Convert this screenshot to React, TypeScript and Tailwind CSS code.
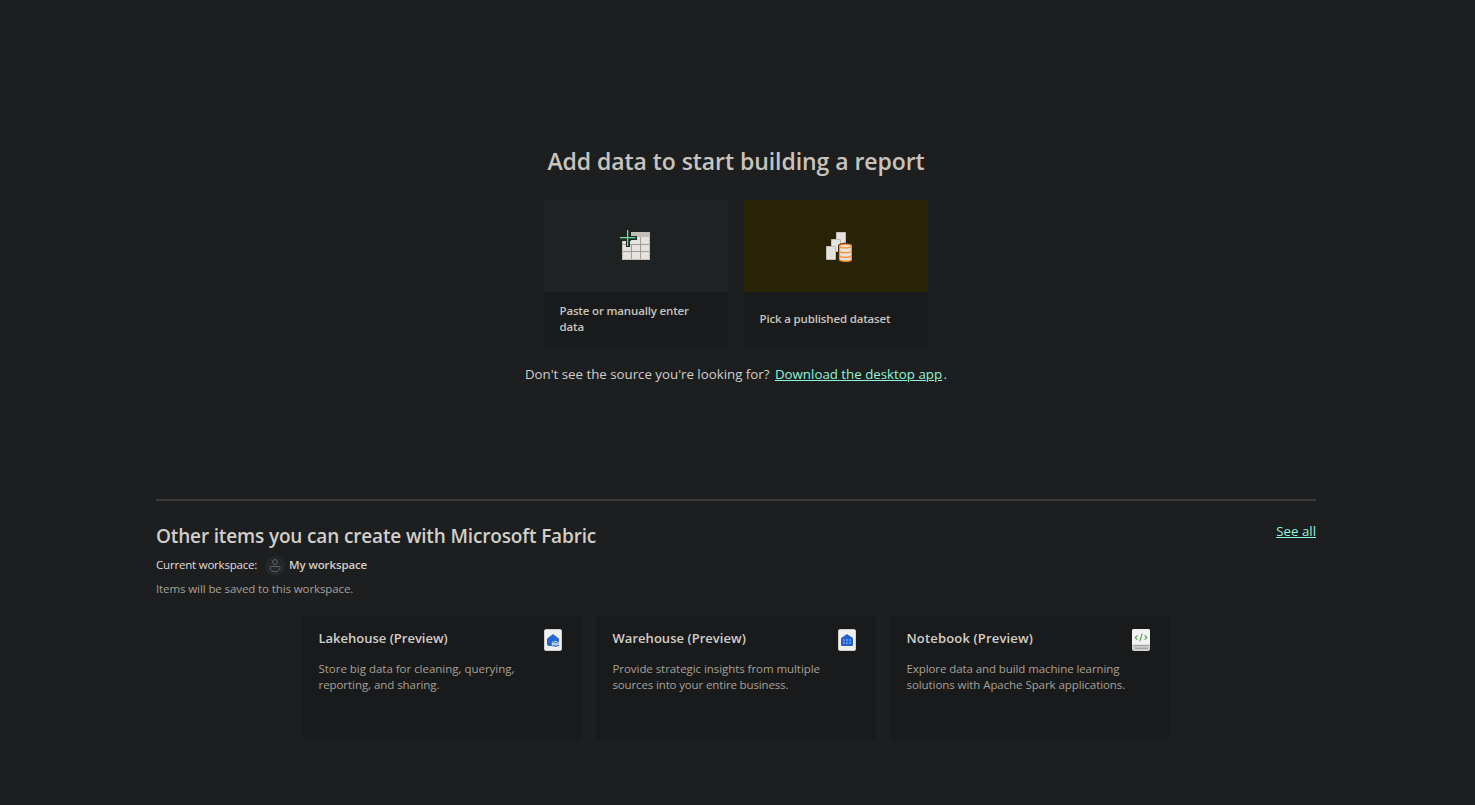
import type { ReactNode } from "react";

function TableIcon() {
  return (
    <svg width="32" height="32" viewBox="0 0 32 32">
      <path d="M11 2h19v28H2V11h9z" fill="#c4beb5" />
      <path d="M3 11h8v18H3zM11 7h18v22H11z" fill="#e5e3df" />
      <path d="M11.5 15v14M20.5 7v22M3 14.5h26M3 21.5h26" stroke="#a39b8d" fill="none" />
      <path d="M6 0h4v17H6zM0 6h17v4H0z" fill="#222727" />
      <path d="M7 0h1v16H7zM0 7h15.500v1H0z" fill="#6fdc92" />
      <path d="M8 0h1v7H8zM0 8h7v1H0zM8 8h1v8H8zM9 8h7v1H9z" fill="#2f5f42" />
    </svg>
  );
}

function DatasetIcon() {
  return (
    <svg width="32" height="32" viewBox="0 0 32 32">
      <g fill="#e5e3df" stroke="#c4beb5">
        <path d="M16.5 2.5h9v12h-9z" />
        <path d="M11.5 9.5h9v12h-9z" />
        <path d="M6.5 16.5h9v13h-9z" />
      </g>
      <path d="M18 16c0-4.500 15.500-4.500 15.500 0v13.500H32c0 3-14 3-14 0z" fill="#282306" />
      <path d="M19.500 16.200c0-2.600 12-2.600 12 0v13.300c0 2.400-12 2.400-12 0z" fill="#e5e3df" stroke="#ff8a22" strokeWidth="1.300" />
      <path d="M19.500 16.200c0 2.300 12 2.300 12 0M19.500 20.900c0 2.300 12 2.300 12 0M19.500 25.600c0 2.300 12 2.300 12 0" fill="none" stroke="#ff8a22" strokeWidth="1.200" />
    </svg>
  );
}

function LakehouseIcon() {
  return (
    <svg width="18" height="22" viewBox="0 0 18 22">
      <rect x="0.5" y="0.5" width="17" height="21" rx="1.5" fill="#f0f0f0" stroke="#cfcfcf" />
      <path d="M9 5 14.400 9.200q.6.500.6 1V12H9q-1.500 1-1.200 2.500L8 17H5q-2 0-2-2v-4.800q0-.6.600-1z" fill="#2467d3" />
      <path d="M8.600 13.800q1-1.800 2.100-.6t2.100 0 2.200 0M8.600 17.400q1-1.800 2.100-.6t2.100 0 2.200 0" stroke="#2467d3" fill="none" strokeWidth="1.100" />
      <path d="M8.600 15.600q1-1.800 2.100-.6t2.100 0 2.200 0" stroke="#5b8fe4" fill="none" strokeWidth=".8" />
    </svg>
  );
}

function WarehouseIcon() {
  return (
    <svg width="18" height="22" viewBox="0 0 18 22">
      <rect x="0.5" y="0.5" width="17" height="21" rx="1.5" fill="#f0f0f0" stroke="#cfcfcf" />
      <path d="M9 5 14.500 8.700q.5.500.5 1V16q0 1-1 1H4q-1 0-1-1V9.700q0-.6.500-1z" fill="#2060cf" />
      <path d="M5 10h2v2H5zM8 10h2v2H8zM11 10h2v2h-2zM5 13h2v2H5zM8 13h2v2H8zM11 13h2v2h-2z" fill="#5c8fe6" />
    </svg>
  );
}

function NotebookIcon() {
  return (
    <svg width="18" height="22" viewBox="0 0 18 22">
      <rect width="18" height="22" rx="2" fill="#d0d0d0" />
      <path d="M2 0h14q2 0 2 2v13.500H0V2q0-2 2-2z" fill="#f2f2f2" />
      <path d="M1.500 16.500H17M3 19.500h13" stroke="#a2a2a2" fill="none" />
      <path d="M2 17.500h15V19H2z" fill="#c0c0c0" />
      <path d="M5.400 6.300 3.200 8.500l2.200 2.200M12.600 6.300l2.200 2.200-2.200 2.200M10.200 4.600 7.800 12.400" stroke="#4da04d" fill="none" strokeWidth="1.100" />
    </svg>
  );
}

function PersonIcon() {
  return (
    <span className="flex size-5 items-center justify-center rounded-full bg-[#25282a]">
      <svg width="12" height="14" viewBox="0 0 12 14" fill="none" stroke="#626365">
        <circle cx="6" cy="3" r="2.400" />
        <path d="M2 7.500h8q1 0 1 1c0 5.700-10 5.700-10 0q0-1 1-1z" />
      </svg>
    </span>
  );
}

function SourceCard({ tone, icon, children }: { tone: string; icon: ReactNode; children: ReactNode }) {
  return (
    <button className="flex h-[146px] w-[184px] flex-col rounded-sm bg-[#191a1b] text-left shadow-[0_0_2px_rgba(0,0,0,0.2)]">
      <span className={`flex h-[92px] w-full items-center justify-center ${tone}`}>{icon}</span>
      <span className="flex w-full flex-1 items-center pr-4 pl-[15.5px] text-[11.5px] leading-4 font-semibold tracking-[-0.16px] text-[#c8c4bd]">
        {children}
      </span>
    </button>
  );
}

type Line = { text: string; tracking: string };

function ItemCard({ title, titleTracking, lines, icon }: { title: string; titleTracking: string; lines: Line[]; icon: ReactNode }) {
  return (
    <article className="flex h-[123px] w-[280px] justify-between rounded-sm bg-[#191a1b] pr-5 pl-[16.5px] shadow-[0_0_2px_rgba(0,0,0,0.08)]">
      <div className="pt-3">
        <h3 className={`text-[13px] leading-5 font-semibold text-[#d2cfca] ${titleTracking}`}>{title}</h3>
        <p className="mt-[13px] text-[11.5px] leading-4 text-[#a8a196]">
          {lines.map((line) => (
            <span key={line.text} className={`block whitespace-nowrap ${line.tracking}`}>{line.text}</span>
          ))}
        </p>
      </div>
      <div className="pt-[13px]">{icon}</div>
    </article>
  );
}

export default function App() {
  return (
    <main className="h-[805px] w-full overflow-hidden bg-[#1d1e1f] pl-[156px] font-['Open_Sans',sans-serif]">
      <div className="flex w-[1160px] flex-col">
        <section className="flex h-[499px] flex-col items-center pt-[145px]">
          <h1 className="text-[23px] leading-8 font-semibold tracking-[-0.06px] text-[#c8c4bd]">Add data to start building a report</h1>
          <div className="mt-[23px] flex gap-4">
            <SourceCard tone="bg-[#1e2223]" icon={<TableIcon />}>Paste or manually enter data</SourceCard>
            <SourceCard tone="bg-[#282306]" icon={<DatasetIcon />}>Pick a published dataset</SourceCard>
          </div>
          <p className="mt-[18px] flex text-[13.3px] leading-5 text-[#d2cfca]">
            <span className="tracking-[-0.01px]">Don't see the source you're looking for?</span>
            <a className="ml-[5.5px] text-[#8ff5dc] underline">Download the desktop app</a>
            <span className="ml-[1.5px]">.</span>
          </p>
        </section>
        <hr className="border-0 border-t-2 border-[#3b3b3c]" />
        <section className="pt-5">
          <div className="flex justify-between">
            <h2 className="pt-px text-[19px] leading-7 font-semibold tracking-[-0.15px] text-[#d2cfca]">Other items you can create with Microsoft Fabric</h2>
            <a className="text-[13.3px] leading-5 text-[#8ff5dc] underline">See all</a>
          </div>
          <div className="mt-[5px] flex h-5 items-center text-[11.5px] text-[#e1dfdd]">
            <span className="tracking-[-0.2px]">Current workspace:</span>
            <span className="mr-1 ml-[7.9px] pt-0.5"><PersonIcon /></span>
            <span className="font-semibold tracking-[-0.12px] text-[#d2cfca]">My workspace</span>
          </div>
          <p className="mt-1.5 text-[11.5px] leading-4 tracking-[-0.1px] text-[#a8a196]">Items will be saved to this workspace.</p>
          <div className="mt-[19px] flex justify-center gap-3.5">
            <ItemCard
              title="Lakehouse (Preview)"
              titleTracking="tracking-normal"
              lines={[
                { text: "Store big data for cleaning, querying,", tracking: "tracking-[-0.02px]" },
                { text: "reporting, and sharing.", tracking: "tracking-[-0.06px]" },
              ]}
              icon={<LakehouseIcon />}
            />
            <ItemCard
              title="Warehouse (Preview)"
              titleTracking="tracking-[0.04px]"
              lines={[
                { text: "Provide strategic insights from multiple", tracking: "tracking-[-0.06px]" },
                { text: "sources into your entire business.", tracking: "tracking-[-0.14px]" },
              ]}
              icon={<WarehouseIcon />}
            />
            <ItemCard
              title="Notebook (Preview)"
              titleTracking="tracking-[0.17px]"
              lines={[
                { text: "Explore data and build machine learning", tracking: "tracking-[-0.09px]" },
                { text: "solutions with Apache Spark applications.", tracking: "tracking-[-0.07px]" },
              ]}
              icon={<NotebookIcon />}
            />
          </div>
        </section>
      </div>
    </main>
  );
}
